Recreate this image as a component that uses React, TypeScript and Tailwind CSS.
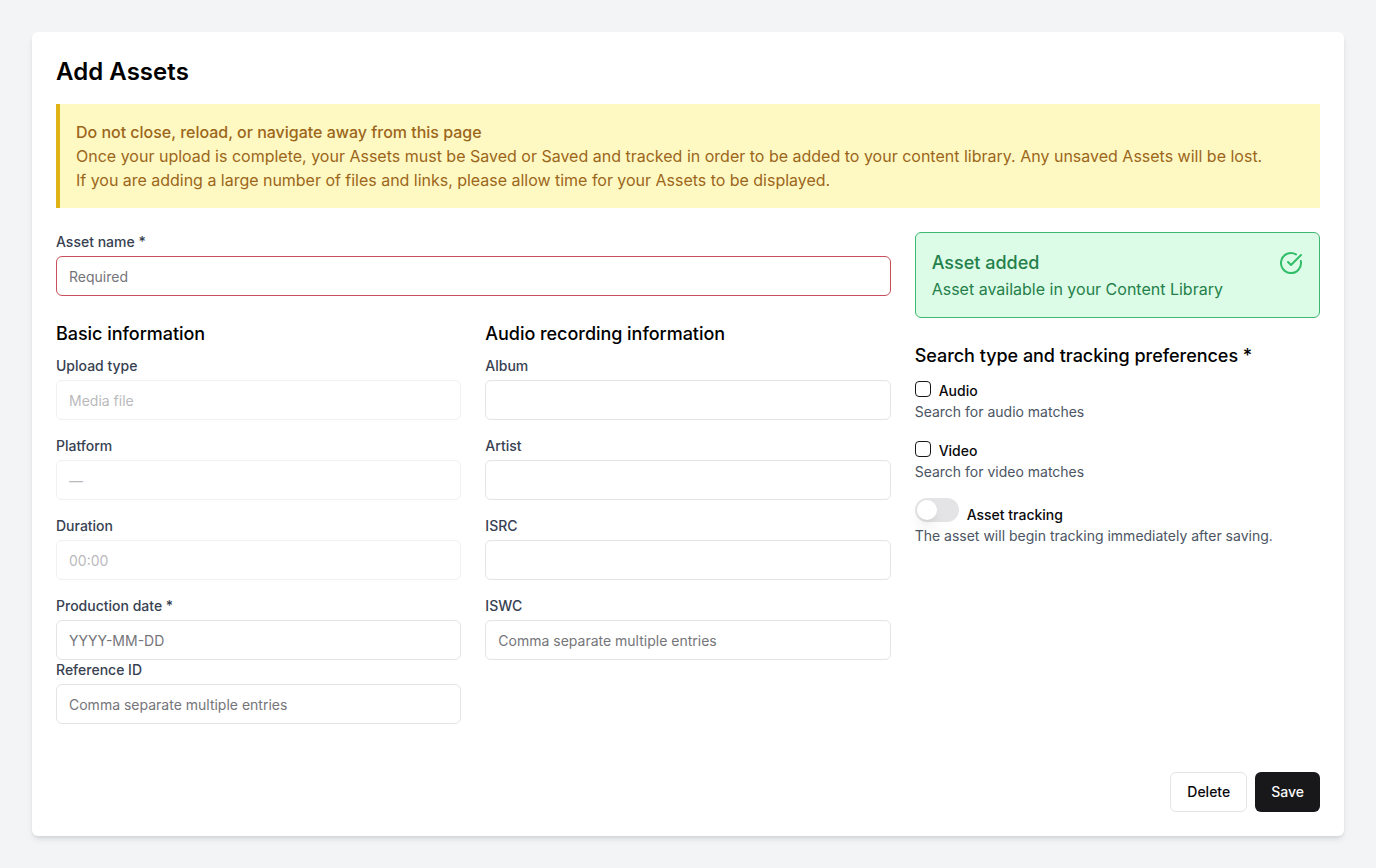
import React from "react";
import { CircleCheckBig } from "lucide-react";

type FieldProps = {
  label: string;
  placeholder?: string;
  disabled?: boolean;
  invalid?: boolean;
};

function Field({ label, placeholder, disabled, invalid }: FieldProps) {
  return (
    <div>
      <label className="block text-sm font-medium text-[#374151]">{label}</label>
      <input
        aria-label={label}
        placeholder={placeholder}
        disabled={disabled}
        className={`mt-1 block h-10 w-full rounded-md border bg-white px-3 py-2 text-sm placeholder:text-[#75757a] disabled:opacity-50 ${
          invalid ? "border-[#c8505a]" : "border-[#e4e4e7]"
        }`}
      />
    </div>
  );
}

function CheckOption({ title, hint }: { title: string; hint: string }) {
  return (
    <div>
      <div className="h-6">
        <button
          type="button"
          role="checkbox"
          aria-checked="false"
          aria-label={title}
          className="mr-2 inline-block size-4 rounded-sm border border-[#18181b]"
        />
        <label className="text-sm font-medium">{title}</label>
      </div>
      <p className="text-sm text-[#4b5563]">{hint}</p>
    </div>
  );
}

export default function App() {
  return (
    <div className="min-h-screen bg-[#f3f4f6] p-8 font-['Inter',sans-serif] text-[#09090b]">
      <main className="rounded-md bg-white p-6 shadow-md">
        <h1 className="mb-4 text-2xl font-semibold tracking-[0.05px] text-black">Add Assets</h1>
        <div className="mb-6 border-l-4 border-[#e0b416] bg-[#fef9c3] p-4 text-[#9c661a]">
          <p className="font-medium tracking-[-0.015px]">
            Do not close, reload, or navigate away from this page
          </p>
          <p>
            Once your upload is complete, your Assets must be Saved or Saved and tracked in order to
            be added to your content library. Any unsaved Assets will be lost.
          </p>
          <p className="tracking-[-0.02px]">
            If you are adding a large number of files and links, please allow time for your Assets to
            be displayed.
          </p>
        </div>

        <div className="grid grid-cols-3 gap-6">
          <div className="col-span-2">
            <Field label="Asset name *" placeholder="Required" invalid />
            <div className="mt-6 grid grid-cols-2 gap-6">
              <section>
                <h2 className="mb-2 text-lg font-medium tracking-[-0.04px] text-black">
                  Basic information
                </h2>
                <div className="space-y-4">
                  <Field label="Upload type" placeholder="Media file" disabled />
                  <Field label="Platform" placeholder="—" disabled />
                  <Field label="Duration" placeholder="00:00" disabled />
                  <Field label="Production date *" placeholder="YYYY-MM-DD" />
                </div>
                <Field label="Reference ID" placeholder="Comma separate multiple entries" />
              </section>
              <section>
                <h2 className="mb-2 text-lg font-medium tracking-[-0.04px] text-black">
                  Audio recording information
                </h2>
                <div className="space-y-4">
                  <Field label="Album" />
                  <Field label="Artist" />
                  <Field label="ISRC" />
                  <Field label="ISWC" placeholder="Comma separate multiple entries" />
                </div>
              </section>
            </div>
          </div>

          <aside>
            <div className="mb-6 flex h-[86px] justify-between rounded-md border border-[#3fb971] bg-[#dcfce7] p-4 text-[#24804a]">
              <div>
                <h3 className="text-lg font-medium">Asset added</h3>
                <p>Asset available in your Content Library</p>
              </div>
              <CircleCheckBig className="mt-0.5 size-6 text-[#32bd68]" />
            </div>
            <h2 className="mb-2 text-lg font-medium tracking-[-0.03px] text-black">
              Search type and tracking preferences *
            </h2>
            <div className="space-y-4">
              <CheckOption title="Audio" hint="Search for audio matches" />
              <CheckOption title="Video" hint="Search for video matches" />
              <div>
                <div className="h-7">
                  <button
                    type="button"
                    role="switch"
                    aria-checked="false"
                    aria-label="Asset tracking"
                    className="mr-2 inline-flex h-6 w-11 items-center rounded-full border-2 border-transparent bg-[#e4e4e7]"
                  >
                    <span className="block size-5 rounded-full bg-white shadow-lg" />
                  </button>
                  <label className="text-sm font-medium">Asset tracking</label>
                </div>
                <p className="text-sm text-[#4b5563]">
                  The asset will begin tracking immediately after saving.
                </p>
              </div>
            </div>
          </aside>
        </div>

        <div className="mt-12 flex justify-end gap-2">
          <button
            type="button"
            className="h-10 rounded-md border border-[#e4e4e7] bg-white px-4 text-sm font-medium"
          >
            Delete
          </button>
          <button
            type="button"
            className="h-10 rounded-md bg-[#18181b] px-4 text-sm font-medium text-[#fafafa]"
          >
            Save
          </button>
        </div>
      </main>
    </div>
  );
}
